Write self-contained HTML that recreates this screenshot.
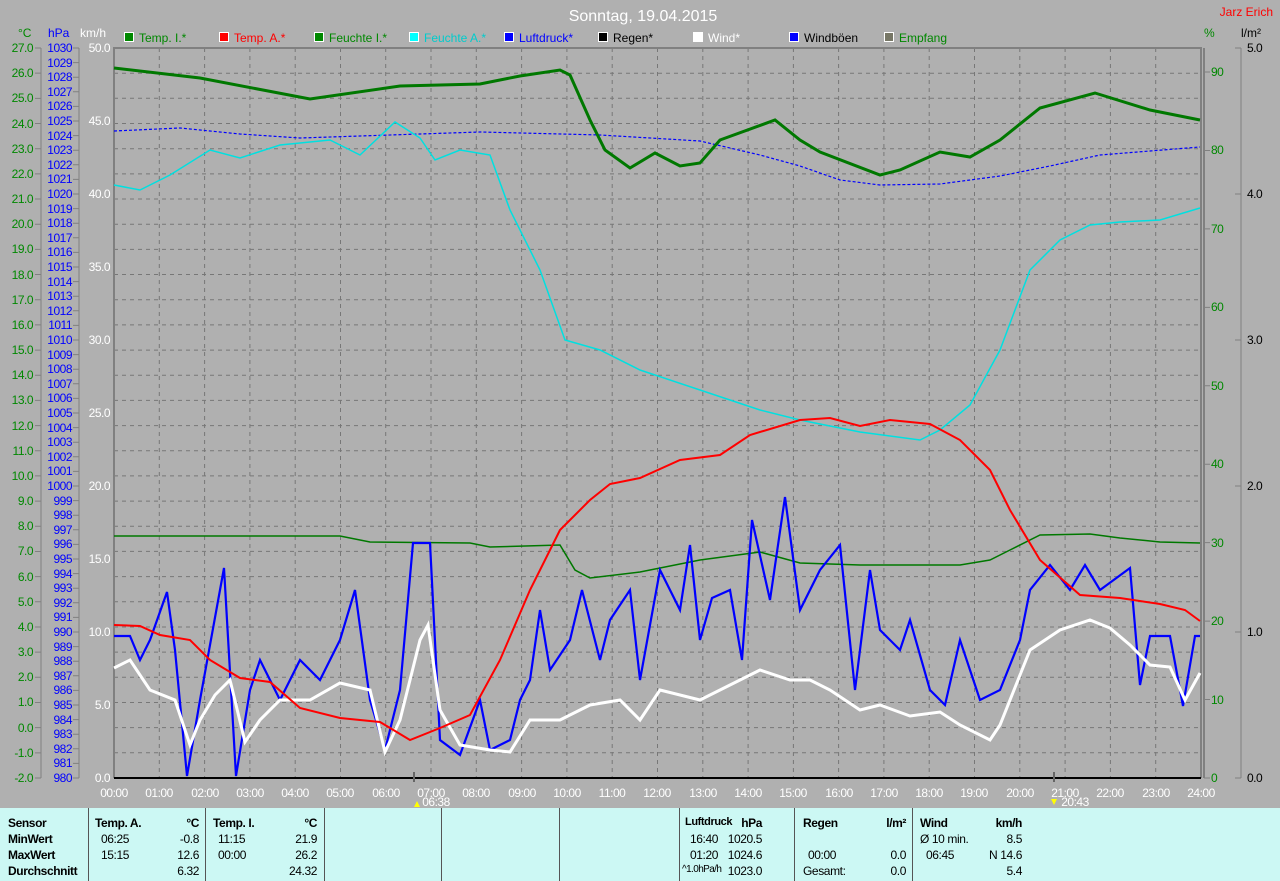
<!DOCTYPE html>
<html><head><meta charset="utf-8"><style>
body{margin:0;background:#b0b0b0;width:1280px;height:881px;overflow:hidden;font-family:"Liberation Sans",sans-serif}
svg{position:absolute;left:0;top:0}
.tb{position:absolute;left:0;top:808px;width:1280px;height:73px;background:#ccf8f4;font-size:12px;color:#000;letter-spacing:-0.4px}
.c{position:absolute;top:0;height:73px;border-right:1px solid #555}
.r{position:absolute;white-space:nowrap}
.b{font-weight:bold}
</style></head><body>
<svg width="1280" height="808" font-family="Liberation Sans, sans-serif">
<text x="643" y="21" font-size="16" fill="#fff" text-anchor="middle">Sonntag, 19.04.2015</text>
<text x="1273" y="16" font-size="12" fill="#f00" text-anchor="end">Jarz Erich</text>
<g font-size="12">
<text x="18" y="37" fill="#080">°C</text><text x="48" y="37" fill="#00f">hPa</text><text x="80" y="37" fill="#fff">km/h</text>
<text x="1204" y="37" fill="#080">%</text><text x="1241" y="37" fill="#000">l/m²</text>
<g stroke="#fff" stroke-width="1">
<rect x="124.5" y="32.5" width="9" height="9" fill="#080"/><rect x="219.5" y="32.5" width="9" height="9" fill="#f00"/><rect x="314.5" y="32.5" width="9" height="9" fill="#080"/><rect x="409.5" y="32.5" width="9" height="9" fill="#0ff"/><rect x="504.5" y="32.5" width="9" height="9" fill="#00f"/><rect x="598.5" y="32.5" width="9" height="9" fill="#000"/><rect x="693.5" y="32.5" width="9" height="9" fill="#fff"/><rect x="789.5" y="32.5" width="9" height="9" fill="#00f"/><rect x="884.5" y="32.5" width="9" height="9" fill="#776"/></g>
<g fill="#080"><text x="139" y="42">Temp. I.*</text><text x="234" y="42" fill="#f00">Temp. A.*</text><text x="329" y="42">Feuchte I.*</text><text x="424" y="42" fill="#0cc">Feuchte A.*</text><text x="519" y="42" fill="#00f">Luftdruck*</text><text x="613" y="42" fill="#000">Regen*</text><text x="708" y="42" fill="#fff">Wind*</text><text x="804" y="42" fill="#000">Windböen</text><text x="899" y="42">Empfang</text></g>
</g>
<path d="M114 73.2H1201M114 98.3H1201M114 123.5H1201M114 148.7H1201M114 173.9H1201M114 199H1201M114 224.2H1201M114 249.4H1201M114 274.5H1201M114 299.7H1201M114 324.9H1201M114 350.1H1201M114 375.2H1201M114 400.4H1201M114 425.6H1201M114 450.8H1201M114 475.9H1201M114 501.1H1201M114 526.3H1201M114 551.4H1201M114 576.6H1201M114 601.8H1201M114 627H1201M114 652.1H1201M114 677.3H1201M114 702.5H1201M114 727.6H1201M114 752.8H1201M159.3 48V778M204.6 48V778M249.9 48V778M295.2 48V778M340.5 48V778M385.7 48V778M431 48V778M476.3 48V778M521.6 48V778M566.9 48V778M612.2 48V778M657.5 48V778M702.8 48V778M748.1 48V778M793.4 48V778M838.6 48V778M883.9 48V778M929.2 48V778M974.5 48V778M1019.8 48V778M1065.1 48V778M1110.4 48V778M1155.7 48V778" stroke="#777" stroke-dasharray="4,4" fill="none"/>
<path d="M114 778V48H1201V778M1204 48V778" stroke="#808080" stroke-width="2" fill="none"/>
<path d="M114 778H1201" stroke="#000" stroke-width="2"/>
<path d="M41 48V778M79 48V778M1241 48V778" stroke="#808080"/>
<path d="M38 47.5V779" stroke="#808080" stroke-width="6" stroke-dasharray="1 24.172"/>
<path d="M76 47.5V779" stroke="#808080" stroke-width="6" stroke-dasharray="1 13.6"/>
<path d="M1207 71.5V779" stroke="#808080" stroke-width="6" stroke-dasharray="1 77.44"/>
<path d="M1238 47.5V779" stroke="#808080" stroke-width="6" stroke-dasharray="1 145"/>
<path d="M414 772V782M1054 772V782" stroke="#666" stroke-width="2"/>
<polyline fill="none" stroke="#007800" stroke-width="1.5" points="114,536 340,536 370,542 470,543 490,547 560,545 575,570 590,578 640,572 700,560 760,552 800,563 860,565 960,565 990,560 1010,550 1040,535 1090,534 1120,538 1160,542 1200,543"/>
<polyline fill="none" stroke="#0000ff" stroke-width="1.2" stroke-dasharray="3,2" points="114,131 180,128 240,134 300,138 360,136 420,134 480,132 600,135 700,141 760,155 800,166 840,180 880,185 940,184 1000,176 1050,166 1100,155 1150,151 1200,147"/>
<polyline fill="none" stroke="#00e0e0" stroke-width="1.5" points="114,185 140,190 170,175 210,150 240,158 280,145 330,140 360,155 395,122 420,138 435,160 460,150 490,155 510,210 540,270 565,340 600,350 640,370 700,390 760,410 800,420 860,432 920,440 940,430 970,405 1000,350 1030,270 1060,240 1090,225 1120,222 1160,220 1200,208"/>
<polyline fill="none" stroke="#007800" stroke-width="3" points="114,68 200,78 310,99 400,86 480,84 520,76 560,70 570,75 590,120 605,150 630,168 655,153 680,166 700,163 720,140 775,120 800,140 820,152 880,175 900,170 940,152 970,157 1000,140 1040,108 1095,93 1150,110 1200,120"/>
<polyline fill="none" stroke="#0000ff" stroke-width="2.2" points="114,636 130,636 140,660 150,640 167,592 175,650 187,776 200,700 224,568 236,776 250,690 260,660 280,700 300,660 320,680 340,640 355,590 370,700 385,750 400,690 413,543 430,543 440,740 460,755 480,700 490,750 510,740 520,700 530,680 540,610 550,670 570,640 582,590 600,660 610,620 630,590 640,680 660,570 680,610 690,545 700,640 712,598 730,590 742,660 752,520 770,600 785,497 800,610 820,570 840,545 855,690 870,570 880,630 900,650 910,620 930,690 945,705 960,640 980,700 1000,690 1020,640 1030,590 1050,565 1070,590 1085,565 1100,590 1130,568 1140,685 1150,636 1170,636 1183,706 1195,636 1200,636"/>
<polyline fill="none" stroke="#fff" stroke-width="3" points="114,668 130,660 150,690 175,700 190,745 200,720 215,695 230,680 245,742 260,720 280,700 310,700 340,683 370,690 385,752 400,720 420,640 428,625 440,710 460,745 490,750 510,752 530,720 560,720 590,705 620,700 640,720 660,690 700,700 720,690 740,680 760,670 790,680 810,680 830,690 860,710 880,705 910,716 940,712 960,725 990,740 1000,725 1030,650 1060,630 1090,620 1110,628 1130,645 1150,665 1170,667 1185,700 1200,673"/>
<polyline fill="none" stroke="#f00" stroke-width="2" points="114,625 140,626 160,635 190,640 210,660 240,678 270,682 300,708 340,718 380,722 410,740 440,728 470,715 500,660 530,590 560,530 590,500 610,484 640,478 680,460 720,455 750,435 800,420 830,418 860,426 890,420 930,424 960,440 990,470 1010,510 1040,560 1080,595 1120,598 1160,604 1185,610 1200,621"/>
<g font-size="12" letter-spacing="-0.5" text-anchor="end">
<g fill="#080">
<text x="33" y="52">27.0</text><text x="33" y="77">26.0</text><text x="33" y="102">25.0</text><text x="33" y="128">24.0</text><text x="33" y="153">23.0</text><text x="33" y="178">22.0</text><text x="33" y="203">21.0</text><text x="33" y="228">20.0</text><text x="33" y="253">19.0</text><text x="33" y="279">18.0</text><text x="33" y="304">17.0</text><text x="33" y="329">16.0</text><text x="33" y="354">15.0</text><text x="33" y="379">14.0</text><text x="33" y="404">13.0</text><text x="33" y="430">12.0</text><text x="33" y="455">11.0</text><text x="33" y="480">10.0</text><text x="33" y="505">9.0</text><text x="33" y="530">8.0</text><text x="33" y="555">7.0</text><text x="33" y="581">6.0</text><text x="33" y="606">5.0</text><text x="33" y="631">4.0</text><text x="33" y="656">3.0</text><text x="33" y="681">2.0</text><text x="33" y="706">1.0</text><text x="33" y="732">0.0</text><text x="33" y="757">-1.0</text><text x="33" y="782">-2.0</text>
</g>
<g fill="#00f">
<text x="72" y="52">1030</text><text x="72" y="67">1029</text><text x="72" y="81">1028</text><text x="72" y="96">1027</text><text x="72" y="110">1026</text><text x="72" y="125">1025</text><text x="72" y="140">1024</text><text x="72" y="154">1023</text><text x="72" y="169">1022</text><text x="72" y="183">1021</text><text x="72" y="198">1020</text><text x="72" y="213">1019</text><text x="72" y="227">1018</text><text x="72" y="242">1017</text><text x="72" y="256">1016</text><text x="72" y="271">1015</text><text x="72" y="286">1014</text><text x="72" y="300">1013</text><text x="72" y="315">1012</text><text x="72" y="329">1011</text><text x="72" y="344">1010</text><text x="72" y="359">1009</text><text x="72" y="373">1008</text><text x="72" y="388">1007</text><text x="72" y="402">1006</text><text x="72" y="417">1005</text><text x="72" y="432">1004</text><text x="72" y="446">1003</text><text x="72" y="461">1002</text><text x="72" y="475">1001</text><text x="72" y="490">1000</text><text x="72" y="505">999</text><text x="72" y="519">998</text><text x="72" y="534">997</text><text x="72" y="548">996</text><text x="72" y="563">995</text><text x="72" y="578">994</text><text x="72" y="592">993</text><text x="72" y="607">992</text><text x="72" y="621">991</text><text x="72" y="636">990</text><text x="72" y="651">989</text><text x="72" y="665">988</text><text x="72" y="680">987</text><text x="72" y="694">986</text><text x="72" y="709">985</text><text x="72" y="724">984</text><text x="72" y="738">983</text><text x="72" y="753">982</text><text x="72" y="767">981</text><text x="72" y="782">980</text>
</g>
<g fill="#fff">
<text x="110" y="52">50.0</text><text x="110" y="125">45.0</text><text x="110" y="198">40.0</text><text x="110" y="271">35.0</text><text x="110" y="344">30.0</text><text x="110" y="417">25.0</text><text x="110" y="490">20.0</text><text x="110" y="563">15.0</text><text x="110" y="636">10.0</text><text x="110" y="709">5.0</text><text x="110" y="782">0.0</text>
</g>
</g>
<g font-size="12" letter-spacing="-0.5">
<g fill="#080"><text x="1211" y="76">90</text><text x="1211" y="154">80</text><text x="1211" y="233">70</text><text x="1211" y="311">60</text><text x="1211" y="390">50</text><text x="1211" y="468">40</text><text x="1211" y="547">30</text><text x="1211" y="625">20</text><text x="1211" y="704">10</text><text x="1211" y="782">0</text></g>
<g fill="#000"><text x="1247" y="52">5.0</text><text x="1247" y="198">4.0</text><text x="1247" y="344">3.0</text><text x="1247" y="490">2.0</text><text x="1247" y="636">1.0</text><text x="1247" y="782">0.0</text></g>
<g fill="#fff" text-anchor="middle"><text x="114" y="797">00:00</text><text x="159" y="797">01:00</text><text x="205" y="797">02:00</text><text x="250" y="797">03:00</text><text x="295" y="797">04:00</text><text x="340" y="797">05:00</text><text x="386" y="797">06:00</text><text x="431" y="797">07:00</text><text x="476" y="797">08:00</text><text x="522" y="797">09:00</text><text x="567" y="797">10:00</text><text x="612" y="797">11:00</text><text x="657" y="797">12:00</text><text x="703" y="797">13:00</text><text x="748" y="797">14:00</text><text x="793" y="797">15:00</text><text x="839" y="797">16:00</text><text x="884" y="797">17:00</text><text x="929" y="797">18:00</text><text x="974" y="797">19:00</text><text x="1020" y="797">20:00</text><text x="1065" y="797">21:00</text><text x="1110" y="797">22:00</text><text x="1156" y="797">23:00</text><text x="1201" y="797">24:00</text>
<text x="436" y="806">06:38</text><text x="1075" y="806">20:43</text></g>
<path d="M414 807l3-6 3 6z" fill="#ff0"/><path d="M1051 799l3 6 3-6z" fill="#ff0"/>
</g>
</svg>
<div class="tb">
<div class="c" style="left:0;width:88px"></div><div class="c" style="left:89px;width:116px"></div><div class="c" style="left:206px;width:118px"></div><div class="c" style="left:325px;width:116px"></div><div class="c" style="left:442px;width:117px"></div><div class="c" style="left:560px;width:119px"></div><div class="c" style="left:680px;width:114px"></div><div class="c" style="left:795px;width:117px"></div>
<div class="r b" style="left:8px;top:8px">Sensor</div><div class="r b" style="left:8px;top:24px">MinWert</div><div class="r b" style="left:8px;top:40px">MaxWert</div><div class="r b" style="left:8px;top:56px">Durchschnitt</div>
<div class="r b" style="left:95px;top:8px">Temp. A.</div><div class="r b" style="right:1081px;top:8px">°C</div>
<div class="r" style="left:101px;top:24px">06:25</div><div class="r" style="right:1081px;top:24px">-0.8</div>
<div class="r" style="left:101px;top:40px">15:15</div><div class="r" style="right:1081px;top:40px">12.6</div><div class="r" style="right:1081px;top:56px">6.32</div>
<div class="r b" style="left:213px;top:8px">Temp. I.</div><div class="r b" style="right:963px;top:8px">°C</div>
<div class="r" style="left:218px;top:24px">11:15</div><div class="r" style="right:963px;top:24px">21.9</div>
<div class="r" style="left:218px;top:40px">00:00</div><div class="r" style="right:963px;top:40px">26.2</div><div class="r" style="right:963px;top:56px">24.32</div>
<div class="r b" style="left:685px;top:8px;font-size:11px">Luftdruck</div><div class="r b" style="right:518px;top:8px">hPa</div>
<div class="r" style="left:690px;top:24px">16:40</div><div class="r" style="right:518px;top:24px">1020.5</div>
<div class="r" style="left:690px;top:40px">01:20</div><div class="r" style="right:518px;top:40px">1024.6</div>
<div class="r" style="left:682px;top:56px;font-size:10px;letter-spacing:-0.6px">^1.0hPa/h</div><div class="r" style="right:518px;top:56px">1023.0</div>
<div class="r b" style="left:803px;top:8px">Regen</div><div class="r b" style="right:374px;top:8px">l/m²</div>
<div class="r" style="left:808px;top:40px">00:00</div><div class="r" style="right:374px;top:40px">0.0</div>
<div class="r" style="left:803px;top:56px">Gesamt:</div><div class="r" style="right:374px;top:56px">0.0</div>
<div class="r b" style="left:920px;top:8px">Wind</div><div class="r b" style="right:258px;top:8px">km/h</div>
<div class="r" style="left:920px;top:24px">Ø 10 min.</div><div class="r" style="right:258px;top:24px">8.5</div>
<div class="r" style="left:926px;top:40px">06:45</div><div class="r" style="right:258px;top:40px">N 14.6</div>
<div class="r" style="right:258px;top:56px">5.4</div>
</div>
</body></html>
